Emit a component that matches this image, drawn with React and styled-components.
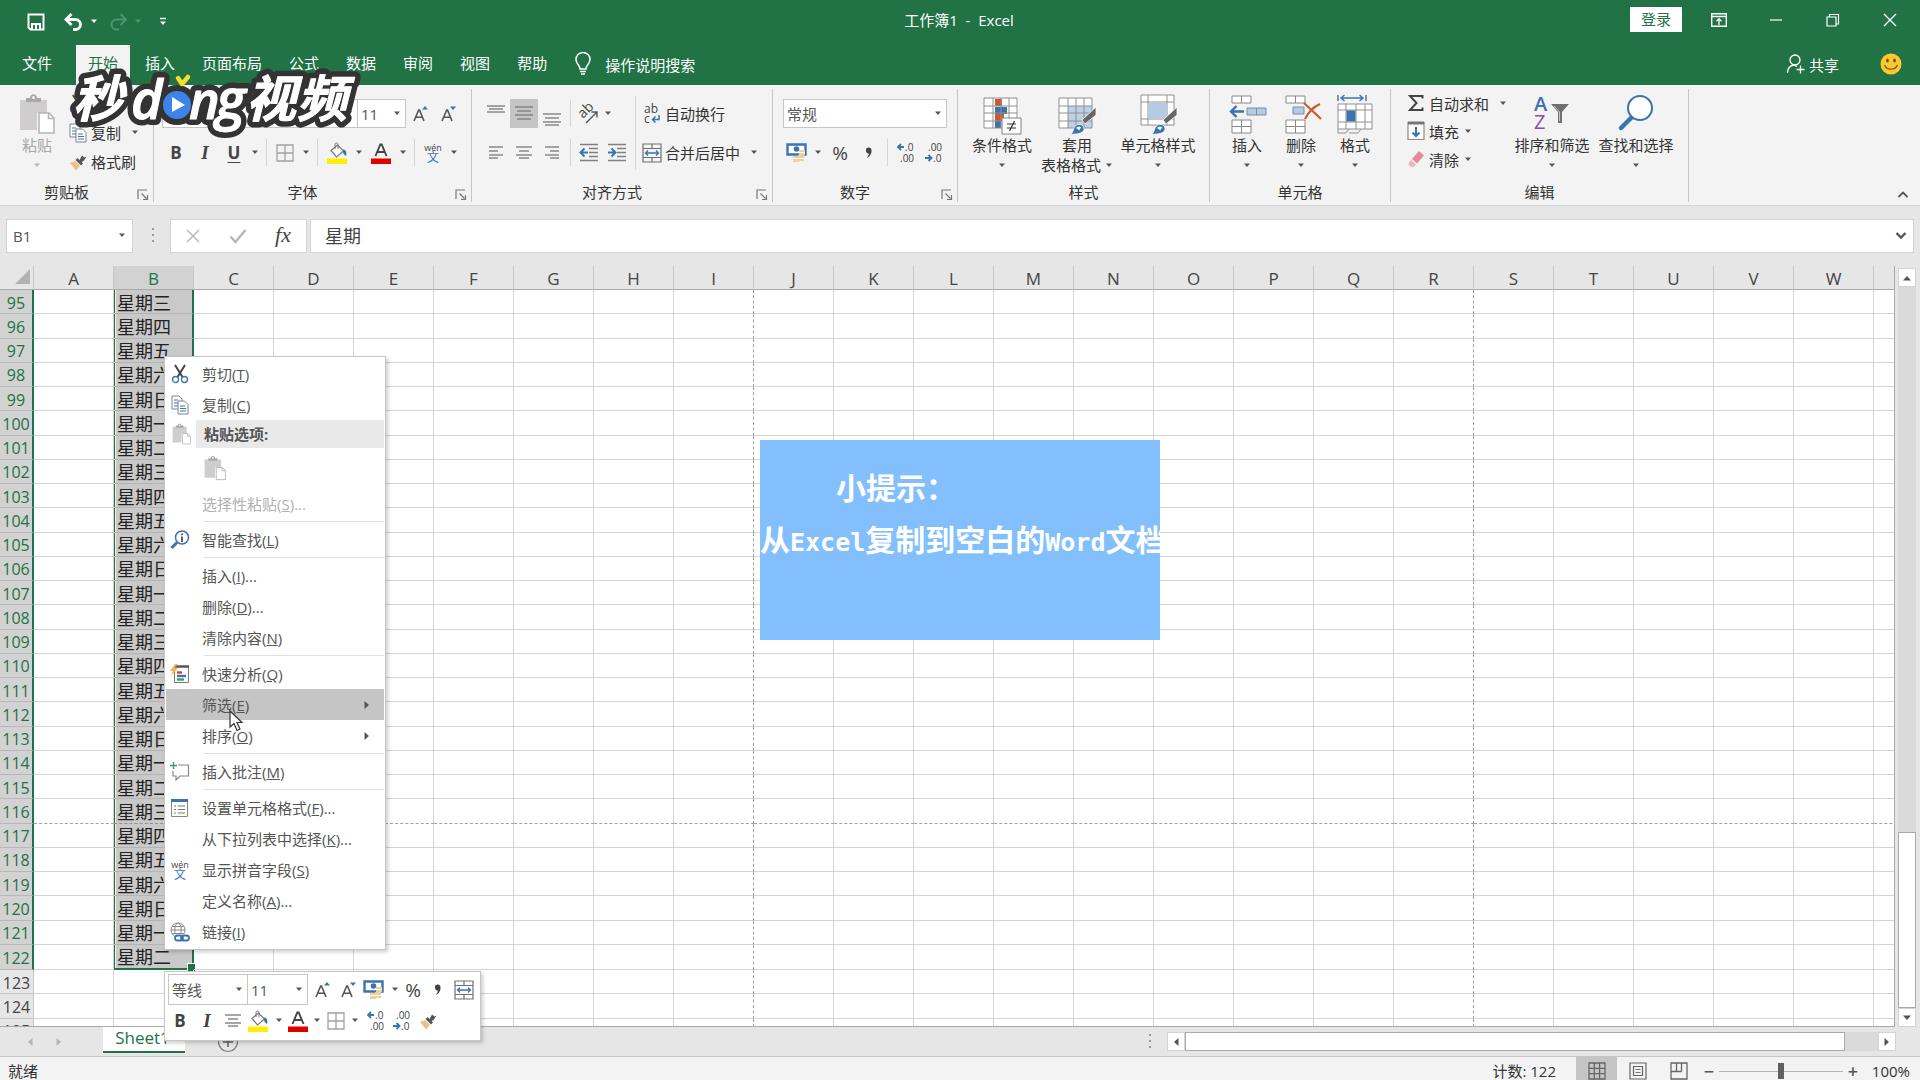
import React from "react";
import styled, { createGlobalStyle, css } from "styled-components";

const palette = {
  green: "#217346",
  ribbon: "#f3f3f3",
  chrome: "#e6e6e6",
  line: "#d4d4d4",
  border: "#c6c6c6",
  text: "#333333",
  muted: "#666666",
  blue: "#3b73af",
  selected: "#c9c9c9",
};

const GlobalStyle = createGlobalStyle`
  * {
    box-sizing: border-box;
  }
  body {
    margin: 0;
    overflow: hidden;
    font-family: "Open Sans", "Noto Sans CJK SC", sans-serif;
    font-size: 15px;
    color: ${palette.text};
  }
  button, input, select {
    font: inherit;
    color: inherit;
    border: 0;
    border-radius: 0;
    background: none;
    padding: 0;
    margin: 0;
  }
  svg {
    display: block;
    flex: none;
    overflow: visible;
  }
`;

/* ---------- icons ---------- */

const Svg = ({ w = 20, h = w, children, ...rest }) => (
  <svg width={w} height={h} viewBox={`0 0 ${w} ${h}`} fill="none" aria-hidden="true" {...rest}>
    {children}
  </svg>
);

const Caret = ({ color = "#555" }) => (
  <Svg w={8} h={5}><path d="M1 0.5h6L4 4z" fill={color} /></Svg>
);

const SaveIcon = () => (
  <Svg w={18}>
    <path d="M1.5 1.5h15v15h-13l-2-2z" stroke="#fff" strokeWidth="2" />
    <path d="M4 10h10v6H4z" fill="#fff" />
    <path d="M6 12h2v4H6zM10 12h2v4h-2z" fill={palette.green} />
  </Svg>
);

const UndoIcon = ({ flip, color = "#fff" }) => (
  <Svg w={20} h={18}>
    <g transform={flip ? "translate(20 0) scale(-1 1)" : undefined} stroke={color}>
      <path d="M2 6.500h9.500a5 5 0 0 1 0 10H9" strokeWidth={flip ? 2 : 2.8} />
      <path d="M7.500 1L2 6.500L7.500 12" strokeWidth={flip ? 2 : 2.8} />
    </g>
  </Svg>
);

const CustomizeIcon = () => (
  <Svg w={8} h={10}>
    <path d="M1 1.500h6" stroke="#fff" strokeWidth="1.500" />
    <path d="M1 4.500h6L4 8z" fill="#fff" />
  </Svg>
);

const BulbIcon = () => (
  <Svg w={18} h={24}>
    <path d="M6 17c0-4-4-5-4-9.500a7 7 0 0 1 14 0C16 12 12 13 12 17z" stroke="#fff" strokeWidth="1.500" />
    <path d="M6 19.500h6M7 22h4" stroke="#fff" strokeWidth="1.500" />
  </Svg>
);

const RibbonDisplayIcon = () => (
  <Svg w={16} h={14}>
    <path d="M0.700 0.700h14.600v12.600H0.700zM0.700 3.500h14.600" stroke="#fff" strokeWidth="1.400" />
    <path d="M8 12V6M5.500 8.200L8 5.700l2.500 2.500" stroke="#fff" strokeWidth="1.300" />
  </Svg>
);

const MinimizeIcon = () => (
  <Svg w={14}><path d="M1 7h12" stroke="#fff" strokeWidth="1.200" /></Svg>
);

const RestoreIcon = () => (
  <Svg w={14}><path d="M1 4h9v9H1zM3.500 4V1.500h9V11H10" stroke="#fff" strokeWidth="1.200" /></Svg>
);

const CloseIcon = ({ color = "#fff" }) => (
  <Svg w={14}><path d="M1 1l12 12M13 1L1 13" stroke={color} strokeWidth="1.400" /></Svg>
);

const ShareIcon = () => (
  <Svg w={20}>
    <circle cx="9" cy="6" r="5" stroke="#fff" strokeWidth="1.300" />
    <path d="M1.500 19c0-5 3-7.500 6.500-8l3 1.500M14.500 11.500v8M10.500 15.500h8" stroke="#fff" strokeWidth="1.300" />
  </Svg>
);

const SmileyIcon = () => (
  <Svg w={22}>
    <circle cx="11" cy="11" r="10.500" fill="#fdc92d" />
    <ellipse cx="7.500" cy="7.500" rx="1.300" ry="2" fill="#6b4a10" />
    <ellipse cx="14.500" cy="7.500" rx="1.300" ry="2" fill="#6b4a10" />
    <path d="M4.500 12c2 5.500 11 5.500 13 0" stroke="#8a5a10" strokeWidth="1.400" />
  </Svg>
);

const PasteIcon = ({ w = 36, h = 42 }) => (
  <svg width={w} height={h} viewBox="0 0 36 42" fill="none" aria-hidden="true">
    <path d="M1 7h27v13H18v17H1z" fill="#cfcdce" />
    <path d="M7 5h4c0-5 7-5 7 0h4v4H7z" fill="#a9a9a9" />
    <circle cx="14.500" cy="4.500" r="1.500" fill="#f3f3f3" />
    <path d="M20 20h10l5 5v15H20z" fill="#fff" stroke="#b5b5b5" strokeWidth="1.500" />
    <path d="M29.500 20v5.500H35" stroke="#b5b5b5" strokeWidth="1.500" />
  </svg>
);

const CutIcon = () => (
  <Svg w={18} h={20}>
    <path d="M4 1l7.500 12M14 1L6.500 13" stroke="#444" strokeWidth="2" />
    <circle cx="4.500" cy="15.500" r="3" stroke={palette.blue} strokeWidth="1.300" />
    <circle cx="13.500" cy="15.500" r="3" stroke={palette.blue} strokeWidth="1.300" />
  </Svg>
);

const CopyIcon = () => (
  <Svg w={18} h={20}>
    <path d="M1 1h7l3 3v10H1z" fill="#fff" stroke="#7a8491" />
    <path d="M3 5h4M3 8h4M3 11h4" stroke={palette.blue} />
    <path d="M7 6h6.500l3.500 3.500V19H7z" fill="#fff" stroke="#7a8491" />
    <path d="M9 11h5M9 13.500h6M9 16h6" stroke={palette.blue} />
  </Svg>
);

const BrushIcon = () => (
  <Svg w={18} h={18}>
    <path d="M1 10l5-2 5 5-4 4.500z" fill="#eac282" />
    <path d="M6.500 7l2-2 5.500 5.500-2 2z" fill="#555" />
    <path d="M10.500 7L13 2.500l2.500 2 2-1-2.500 4-3 2z" fill="#555" />
  </Svg>
);

const Letter = styled.span`
  font-family: ${(p) => (p.$serif ? '"Liberation Serif", serif' : '"Open Sans", sans-serif')};
  font-size: ${(p) => p.$size || 17}px;
  line-height: 20px;
  font-weight: ${(p) => (p.$thin ? 400 : 700)};
  font-style: ${(p) => (p.$italic ? "italic" : "normal")};
  text-decoration: ${(p) => (p.$underline ? "underline" : "none")};
  text-underline-offset: 3px;
  color: #444;
`;

const CommaIcon = () => (
  <Svg w={10} h={12}>
    <path d="M2 3.500a2.700 2.700 0 0 1 5.500-0.300C7.800 7 5.500 10 2.500 11c1.500-1.500 2.300-3 2.300-4.500C3.200 6.800 2 5.500 2 3.500z" fill="#444" />
  </Svg>
);

const FontSizeIcon = ({ down }) => (
  <Svg w={18} h={20}>
    <path d="M2 17L6.700 6h0.800L12 17M3.800 13.300h6.600" stroke="#555" strokeWidth="1.600" />
    <path d={down ? "M10 2.500h6L13 6z" : "M10 5.500h6L13 2z"} fill={palette.blue} />
  </Svg>
);

const BordersIcon = () => (
  <Svg w={18}>
    <path d="M1 1h16v16H1zM9 1v16M1 9h16" stroke="#a2a2a2" strokeWidth="1.300" />
  </Svg>
);

const BucketIcon = () => (
  <Svg w={22} h={22}>
    <path d="M5 8.500L11.500 3l6 6-7 6z" fill="#fff" stroke="#777" strokeWidth="1.200" />
    <path d="M9 7V2.500a1.500 1.500 0 0 1 3 0V7" stroke="#777" />
    <path d="M17 7.500c3 0 4 3 3 6.500-2-1-3.500-3-3-6.500z" fill={palette.blue} />
    <path d="M1 16.500h20V22H1z" fill="#ffee00" />
  </Svg>
);

const FontColorIcon = () => (
  <Svg w={22} h={22}>
    <path d="M5.500 14L10.300 2.500h1.400L16.500 14M7.500 10h7" stroke="#444" strokeWidth="1.900" />
    <path d="M1 16.500h20V22H1z" fill="#e00000" />
  </Svg>
);

const PhoneticIcon = () => (
  <Svg w={20} h={20}>
    <text x="10" y="8" fontSize="9" fontFamily="Open Sans, sans-serif" textAnchor="middle" fill="#444">wén</text>
    <text x="10" y="19" fontSize="12" fontFamily="Noto Sans CJK SC, sans-serif" textAnchor="middle" fill={palette.blue}>文</text>
  </Svg>
);

const LINES = {
  top: [[1, 3, 18], [3, 6, 14], [1, 9, 18]],
  middle: [[1, 4, 18], [3, 8, 14], [1, 12, 18], [3, 16, 14]],
  bottom: [[1, 11, 18], [3, 15, 14], [1, 19, 18], [3, 22, 14]],
  left: [[3, 5, 14], [3, 9, 9], [3, 13, 14], [3, 16, 9]],
  center: [[2, 5, 16], [5, 9, 10], [2, 13, 16], [5, 16, 10]],
  right: [[3, 5, 14], [8, 9, 9], [3, 13, 14], [8, 16, 9]],
};

const LinesIcon = ({ kind }) => (
  <Svg w={20} h={22}>
    {LINES[kind].map(([x, y, w]) => (
      <path key={y} d={`M${x} ${y}h${w}`} stroke="#808080" strokeWidth="1.400" />
    ))}
  </Svg>
);

const OrientationIcon = () => (
  <Svg w={20} h={20}>
    <text fontSize="14" fontFamily="Open Sans, sans-serif" fill="#444" transform="translate(5 15) rotate(-45)">ab</text>
    <path d="M8 19L18.500 8.500M13.500 8h5.500v5.500" stroke="#555" strokeWidth="1.400" />
  </Svg>
);

const IndentIcon = ({ out }) => (
  <Svg w={20} h={20}>
    <path d="M1 1.500h18M10 5.500h9M10 9.500h9M10 13.500h9M1 17.500h18" stroke="#808080" strokeWidth="1.300" />
    <path d={out ? "M9 9.500H2M5.500 5.500l-4 4 4 4" : "M1 9.500h7M4.500 5.500l4 4-4 4"} stroke={palette.blue} strokeWidth="2" />
  </Svg>
);

const WrapIcon = () => (
  <Svg w={20} h={22}>
    <text x="2" y="10" fontSize="12" fontFamily="Open Sans, sans-serif" fill="#444">ab</text>
    <text x="2" y="20" fontSize="12" fontFamily="Open Sans, sans-serif" fill="#444">c</text>
    <path d="M17 12v4.500h-6M13.500 13.500l-3 3 3 3" stroke={palette.blue} strokeWidth="1.500" />
  </Svg>
);

const MergeIcon = () => (
  <Svg w={20} h={20}>
    <path d="M1 1h18v18H1zM1 5.500h18M1 14.500h18M10 1v4.500M10 14.500V19" stroke="#707070" strokeWidth="1.200" />
    <path d="M3.500 10h13M6 7.500L3.500 10 6 12.500M14 7.500l2.500 2.500-2.500 2.500" stroke={palette.blue} strokeWidth="1.300" />
  </Svg>
);

const CurrencyIcon = () => (
  <Svg w={22} h={20}>
    <path d="M1.500 1.500h18v10h-18z" fill="#fff" stroke={palette.blue} strokeWidth="2.400" />
    <circle cx="10.500" cy="6" r="2.800" fill={palette.blue} />
    <path d="M13 7h6v5h-6zM7 13h6v6H7zM12 12h6v6h-6z" fill="#f0cf9d" />
    <path d="M13 9.500h6M7 15.500h6M13 15.500h5" stroke="#fff" />
  </Svg>
);

const DecimalIcon = ({ less }) => (
  <Svg w={20} h={22}>
    <text x={less ? 4 : 9} y="9" fontSize="10" fontFamily="Open Sans, sans-serif" fill="#444">{less ? ".00" : ".0"}</text>
    <text x={less ? 9 : 4} y="20" fontSize="10" fontFamily="Open Sans, sans-serif" fill="#444">{less ? ".0" : ".00"}</text>
    <path d={less ? "M1 16h6M4.500 13l3 3-3 3" : "M8 5H2M5 2L2 5l3 3"} stroke={palette.blue} strokeWidth="1.800" />
  </Svg>
);

const StyleGrid = ({ x = 3, y = 5 }) => (
  <path
    d={`M${x} ${y}h33v30h-33zM${x} ${y + 8}h33M${x} ${y + 15}h33M${x} ${y + 23}h33M${x + 9} ${y}v30M${x + 17} ${y}v30M${x + 25} ${y}v30`}
    fill="none"
    stroke="#909090"
  />
);

const StyleBrush = () => (
  <>
    <path d="M39 14L25 27l3 4 11-9z" fill="#666" stroke="#fff" strokeWidth="0.800" />
    <path d="M13 41c3 0 3-5 5-7.500 3-3.500 8-2.500 9 1.500 1 4.500-6 7-14 6z" fill={palette.blue} stroke="#fff" strokeWidth="0.800" />
    <path d="M19 35c2-2 4-2 5.500 0-1.500 0-2 1.500-2 2.500" fill="#fff" />
  </>
);

const ConditionalIcon = () => (
  <Svg w={40} h={42}>
    <path d="M2 6h34v29H2z" fill="#fff" />
    <path d="M13 6h7v7h-7zM13 21h9v7h-9z" fill="#cf5630" />
    <path d="M13 14h12v7H13zM13 28h6v7h-6z" fill={palette.blue} />
    <StyleGrid x={2} y={5} />
    <path d="M20 25h19v16H20z" fill="#fff" stroke="#808080" />
    <path d="M25 31h9M25 35h9M32.500 28l-5 10" stroke="#333" strokeWidth="1.200" />
  </Svg>
);

const FormatTableIcon = () => (
  <Svg w={40} h={42}>
    <path d="M2 5h33v30H2z" fill="#fff" />
    <path d="M11 13h24v22H11z" fill="#bdd0e6" />
    <StyleGrid x={2} y={5} />
    <StyleBrush />
  </Svg>
);

const CellStylesIcon = () => (
  <Svg w={40} h={42}>
    <path d="M3 2h33v30H3zM3 9h33M3 26h33M10 2v30M29 2v30" fill="#fff" stroke="#909090" />
    <path d="M11 10h18v15H11z" fill="#b5cbe4" />
    <StyleBrush />
  </Svg>
);

const CellsIcon = ({ remove }) => (
  <Svg w={38} h={42}>
    <path d="M4 3h19v7H4zM13.500 3v7M4 27h19v13H4zM13.500 27v13M4 33.500h19" fill="#fff" stroke="#888" />
    {remove ? (
      <>
        <path d="M11 14h11v7H11z" fill="#b5cbe4" stroke="#7b8da3" />
        <path d="M22 10l17 16M38 11c-7 3-12 9-15 15" stroke="#cf5630" strokeWidth="2.200" />
      </>
    ) : (
      <>
        <path d="M19 15h19v7H19zM28.500 15v7" fill="#b5cbe4" stroke="#7b8da3" />
        <path d="M16 18.500H3M8.500 13L3 18.500 8.500 24" stroke={palette.blue} strokeWidth="2.400" />
      </>
    )}
  </Svg>
);

const FormatCellsIcon = () => (
  <Svg w={38} h={42}>
    <path d="M2 2v6M30 2v6M5 5h22M8.500 2L5 5l3.500 3M23.500 2L27 5l-3.500 3" stroke={palette.blue} strokeWidth="1.400" />
    <path d="M2 11h34v25H2zM2 17h34M2 29h34M10 11v25M20 11v25M29 11v25" fill="#fff" stroke="#909090" />
    <path d="M10.500 17.500h9v11h-9z" fill={palette.blue} />
    <path d="M2 36v4h8l3-4M13 40h9l3-4" stroke="#909090" />
  </Svg>
);

const FillIcon = () => (
  <Svg w={18} h={20}>
    <path d="M1 1.500h16v17H1z" fill="#fff" stroke="#888" strokeWidth="1.200" />
    <path d="M1 2h16" stroke="#777" strokeWidth="3" />
    <path d="M9 6v9M5.500 11.500L9 15l3.500-3.500" stroke={palette.blue} strokeWidth="2" />
  </Svg>
);

const EraserIcon = () => (
  <Svg w={18} h={18}>
    <path d="M5 9l7-8 5 4.500-7 8z" fill="#e28a9e" />
    <path d="M4 10l5 4.500-2.500 2.500H4L1 14z" fill="#efb3c0" />
  </Svg>
);

const SigmaIcon = () => (
  <Svg w={18} h={18}>
    <path d="M15.500 4.500V2H3l6.500 7L3 16h12.500v-2.500" stroke="#444" strokeWidth="2" />
  </Svg>
);

const SortFilterIcon = () => (
  <Svg w={40} h={42}>
    <text x="2" y="18" fontSize="20" fontWeight="600" fontFamily="Open Sans, sans-serif" fill={palette.blue}>A</text>
    <text x="2" y="36" fontSize="20" fontFamily="Open Sans, sans-serif" fill="#8a4fa8">Z</text>
    <path d="M19 11h18l-7 8v11h-4V19z" fill="#707070" />
    <path d="M22 13l5.500 6v9" stroke="#c8c8c8" />
  </Svg>
);

const FindIcon = () => (
  <Svg w={38} h={42}>
    <path d="M16 23L4 35" stroke={palette.blue} strokeWidth="4.500" strokeLinecap="round" />
    <circle cx="23" cy="15" r="12" fill="#fff" stroke={palette.blue} strokeWidth="2" />
  </Svg>
);

const LauncherIcon = () => (
  <Svg w={12}>
    <path d="M1 10V1h9" stroke="#777" strokeWidth="1.200" />
    <path d="M4.500 4.500l5 5M10.500 6v4.500H6" stroke="#777" strokeWidth="1.200" />
  </Svg>
);

const ChevronIcon = ({ up }) => (
  <Svg w={12} h={9}>
    <path d={up ? "M1.500 7L6 2.500 10.500 7" : "M1.500 2L6 6.500 10.500 2"} stroke="#555" strokeWidth={up ? 1.8 : 2.4} />
  </Svg>
);

const CheckIcon = () => (
  <Svg w={18} h={16}><path d="M1.500 8.500l5 5.500L16.500 2" stroke="#b5b5b5" strokeWidth="2.400" /></Svg>
);

const SmartLookupIcon = () => (
  <Svg w={20} h={20}>
    <path d="M7 12.500L1.500 18" stroke={palette.blue} strokeWidth="3" />
    <circle cx="12" cy="7.500" r="6.500" fill="#fff" stroke={palette.blue} strokeWidth="1.500" />
    <path d="M12 6.500V12M12 3.500v1.700" stroke="#444" strokeWidth="1.700" />
  </Svg>
);

const QuickAnalysisIcon = () => (
  <Svg w={20} h={20}>
    <path d="M4.500 2.500h14v16h-14z" fill="#fff" stroke="#777" />
    <path d="M4 2.500h15" stroke="#555" strokeWidth="2.500" />
    <path d="M7 8.500h5" stroke="#d04a2a" strokeWidth="2.400" />
    <path d="M7 12h9" stroke={palette.blue} strokeWidth="2.400" />
    <path d="M7 15.500h7" stroke="#3a9a7a" strokeWidth="2.400" />
    <path d="M5 0L0 7h3L1 12l7-8H4.500L8 0z" fill="#f0b452" />
  </Svg>
);

const CommentIcon = () => (
  <Svg w={20} h={20}>
    <path d="M8 3h10.500v11H10l-4 4v-4H3V9" stroke="#888" strokeWidth="1.200" />
    <path d="M3.500 0v7M0 3.500h7" stroke="#3a9a6a" strokeWidth="1.400" />
  </Svg>
);

const FormatListIcon = () => (
  <Svg w={20} h={20}>
    <path d="M1.500 1.500h16v17h-16z" fill="#fff" stroke="#888" />
    <path d="M1 2.500h17" stroke={palette.blue} strokeWidth="3" />
    <path d="M4 8h2M4 11.500h2M4 15h2M8 8h7M8 11.500h7M8 15h7" stroke="#777" strokeWidth="1.200" />
  </Svg>
);

const LinkIcon = () => (
  <Svg w={20} h={20}>
    <circle cx="8" cy="8" r="7" stroke="#888" />
    <ellipse cx="8" cy="8" rx="3.200" ry="7" stroke="#888" />
    <path d="M1 8h14M2 4.500h12M2 11.500h12" stroke="#888" />
    <path d="M4 12h16v8H4z" fill="#fff" />
    <rect x="5" y="13.500" width="8" height="5" rx="2.500" stroke={palette.blue} strokeWidth="1.800" />
    <rect x="11" y="13.500" width="8" height="5" rx="2.500" stroke={palette.blue} strokeWidth="1.800" />
  </Svg>
);

const Arrow = ({ dir, color = "#555" }) => {
  const paths = {
    left: "M7.500 1v8L3 5z",
    right: "M2.500 1v8L7 5z",
    up: "M1 7.500h8L5 3z",
    down: "M1 2.500h8L5 7z",
  };
  return <Svg w={10}><path d={paths[dir]} fill={color} /></Svg>;
};

const ViewIcon = ({ kind }) => (
  <Svg w={18} h={18}>
    {kind === "normal" && <path d="M1 1h16v16H1zM1 6.300h16M1 11.600h16M6.300 1v16M11.600 1v16" stroke="#666" strokeWidth="1.300" />}
    {kind === "layout" && (
      <>
        <path d="M1 1h16v16H1zM4.500 4.500h9v9h-9z" stroke="#666" strokeWidth="1.200" />
        <path d="M6.500 7.500h5M6.500 10.500h5" stroke="#777" />
      </>
    )}
    {kind === "break" && <path d="M1 1h16v16H1zM6.500 1v8.500M11.500 1v8.500M1 9.500h10.500" stroke="#666" strokeWidth="1.300" />}
  </Svg>
);

/* ---------- window frame ---------- */

const Window = styled.div`
  position: relative;
  display: flex;
  flex-direction: column;
  height: 100vh;
  overflow: hidden;
  background: ${palette.chrome};
`;

const TitleBar = styled.header`
  display: grid;
  grid-template-columns: 1fr auto 1fr;
  align-items: center;
  height: 40px;
  padding: 0 2px 1px 0;
  background: ${palette.green};
  color: #fff;
`;

const QuickAccess = styled.div`
  display: flex;
  align-items: center;
  gap: 7px;
  padding: 4px 0 0 27px;
`;

const QuickButton = styled.button`
  display: flex;
  align-items: center;
  gap: 6px;
  margin-right: ${(p) => p.$after || 0}px;
`;

const Title = styled.h1`
  margin: 0;
  font-size: 15px;
  line-height: 24px;
  font-weight: 400;
  white-space: pre;
`;

const WindowControls = styled.div`
  display: flex;
  justify-content: flex-end;
  align-items: center;
`;

const LoginButton = styled.button`
  width: 52px;
  height: 25px;
  line-height: 25px;
  margin-right: 8px;
  background: #fff;
  color: ${palette.green};
`;

const WindowButton = styled.button`
  display: grid;
  place-items: center;
  width: 57px;
  height: 39px;
`;

const TabBar = styled.nav`
  display: flex;
  align-items: flex-end;
  gap: 3px;
  height: 45px;
  padding-left: 10px;
  background: ${palette.green};
  color: #fff;
`;

const Tab = styled.button`
  height: 40px;
  padding: 0 12px 6px;
  margin-right: ${(p) => p.$after || 0}px;
  ${(p) => p.$active && css`
    background: ${palette.ribbon};
    color: ${palette.green};
  `}
`;

const TabAction = styled.button`
  display: flex;
  align-items: center;
  gap: ${(p) => p.$gap}px;
  height: 40px;
  padding-bottom: 2px;
  margin-left: ${(p) => (p.$end ? "auto" : "12px")};
  margin-right: ${(p) => (p.$end ? 38 : 0)}px;
`;

const Feedback = styled.button`
  display: flex;
  align-items: center;
  height: 40px;
  padding-bottom: 2px;
  margin-right: 18px;
`;

/* ---------- ribbon ---------- */

const Ribbon = styled.div`
  display: flex;
  height: 121px;
  padding-top: 4px;
  background: ${palette.ribbon};
  border-bottom: 1px solid ${palette.line};
`;

const Group = styled.section`
  display: flex;
  flex-direction: column;
  flex: 0 0 ${(p) => p.$width}px;
  height: 113px;
  border-right: 1px solid ${palette.border};
`;

const GroupBody = styled.div`
  display: flex;
  flex: 1;
  padding-left: ${(p) => p.$pad || 8}px;
`;

const GroupFooter = styled.div`
  display: flex;
  align-items: flex-end;
  height: 20px;
  line-height: 20px;
  text-align: center;
  span {
    flex: 1;
  }
  button {
    width: 20px;
    padding: 0 4px 1px;
  }
`;

const Rows = styled.div`
  display: flex;
  flex-direction: column;
  gap: 10px;
  padding-top: 10px;
`;

const Stack = styled.div`
  display: flex;
  flex-direction: column;
  width: ${(p) => (p.$width ? `${p.$width}px` : "auto")};
`;

const Row = styled.div`
  display: flex;
  align-items: center;
  height: 29px;
`;

const Tool = styled.button`
  display: grid;
  place-items: center;
  width: ${(p) => p.$width || 28}px;
  height: 29px;
  background: ${(p) => (p.$active ? "#c5c5c5" : "none")};
`;

const Divider = styled.span`
  width: 1px;
  height: 27px;
  margin: 0 4px;
  background: ${palette.line};
`;

const TallDivider = styled.span`
  width: 1px;
  height: 74px;
  margin: 7px 4px 0;
  background: ${palette.line};
`;

const Labelled = styled.button`
  display: flex;
  align-items: center;
  height: ${(p) => p.$height || 29}px;
  white-space: nowrap;
`;

const IconSlot = styled.span`
  display: grid;
  place-items: center;
  width: 24px;
  margin-right: 1px;
`;

const CaretSlot = styled.span`
  margin-left: ${(p) => p.$gap || 5}px;
`;

const Big = styled.button`
  display: flex;
  flex-direction: column;
  align-items: center;
  width: ${(p) => p.$width}px;
  height: 92px;
  padding-top: 4px;
  line-height: 20px;
  white-space: nowrap;
  color: ${(p) => (p.disabled ? "#a8a8a8" : "inherit")};
`;

const BigLine = styled.span`
  display: flex;
  justify-content: center;
  align-items: center;
  gap: 4px;
  height: 20px;
`;

const SelectBox = styled.span`
  display: flex;
  align-items: center;
  width: ${(p) => p.$width}px;
  height: ${(p) => p.$height || 29}px;
  padding-right: 4px;
  background: #fff;
  border: 1px solid ${palette.border};
  & + & {
    border-left: 0;
  }
`;

const Select = styled.select`
  appearance: none;
  flex: 1;
  min-width: 0;
  padding-left: 3px;
  color: #555;
`;

const Collapse = styled.button`
  align-self: flex-end;
  margin: 0 11px 6px auto;
`;

/* ---------- formula bar ---------- */

const FormulaBar = styled.div`
  display: flex;
  align-items: center;
  height: 60px;
  padding: 0 6px 1px;
`;

const WhiteBox = styled.div`
  display: flex;
  align-items: center;
  justify-content: space-between;
  flex: ${(p) => (p.$width ? `0 0 ${p.$width}px` : 1)};
  height: 34px;
  padding: 0 ${(p) => p.$padX || 6}px;
  margin-right: ${(p) => (p.$width ? 3 : 0)}px;
  background: #fff;
  border: 1px solid ${palette.line};
`;

const NameInput = styled.input`
  width: 90px;
  color: #555;
`;

const FormulaInput = styled.input`
  flex: 1;
  padding-left: 8px;
  font-size: 18px;
  line-height: 24px;
  color: #444;
`;

const Dots = styled.span`
  width: 2px;
  height: 15px;
  margin: 0 ${(p) => p.$gap}px;
  background: repeating-linear-gradient(#999 0 2px, transparent 2px 6px);
`;

/* ---------- sheet ---------- */

const SheetArea = styled.main`
  display: flex;
  flex: 1;
  min-height: 0;
`;

const Viewport = styled.div`
  flex: 1;
  min-width: 0;
  overflow: hidden;
  background: #fff;
  border-right: 1px solid #ababab;
  border-bottom: 1px solid #ababab;
`;

const Grid = styled.table`
  table-layout: fixed;
  width: 1954px;
  height: 777px;
  border-collapse: separate;
  border-spacing: 0;
  font-size: 17px;
  line-height: 20px;
`;

const ColumnHead = styled.th`
  height: 24px;
  padding: 2px 0 0;
  font-weight: 400;
  color: ${(p) => (p.$active ? palette.green : "#444")};
  background: ${(p) => (p.$active ? "#d2d2d2" : palette.chrome)};
  border-right: 1px solid ${palette.border};
  border-bottom: 1px solid #ababab;
`;

const Corner = styled.th`
  width: 34px;
  padding: 0 3px 2px 0;
  background: ${palette.chrome};
  border-right: 1px solid ${palette.border};
  border-bottom: 1px solid #ababab;
  svg {
    margin-left: auto;
  }
`;

const RowHead = styled.th`
  padding: 2px 0 0;
  font-size: 16px;
  font-weight: 400;
  text-align: center;
  color: ${(p) => (p.$active ? palette.green : "#444")};
  background: ${(p) => (p.$active ? "#d2d2d2" : palette.chrome)};
  border-right: ${(p) => (p.$active ? `2px solid ${palette.green}` : `1px solid ${palette.border}`)};
  border-bottom: 1px solid ${(p) => (p.$active ? "#b8b8b8" : palette.border)};
`;

const Cell = styled.td`
  position: relative;
  padding: 2px 0 0 3px;
  white-space: nowrap;
  border-right: 1px ${(p) => (p.$breakRight ? "dashed #a0a0a0" : `solid ${palette.line}`)};
  border-bottom: 1px ${(p) => (p.$breakBelow ? "dashed #a0a0a0" : `solid ${palette.line}`)};
  ${(p) => p.$selected && css`
    font-size: 18px;
    color: #222;
    background: ${palette.selected};
    border-right: 2px solid ${palette.green};
    border-bottom-color: ${p.$breakBelow ? "#909090" : "#b4b4b4"};
    box-shadow: inset 1px 0 ${palette.green}, inset 2px 0 #f0f0f0;
  `}
  ${(p) => p.$last && css`
    border-bottom: 2px solid ${palette.green};
    &::after {
      content: "";
      position: absolute;
      right: -4px;
      bottom: -4px;
      width: 7px;
      height: 7px;
      background: ${palette.green};
      border: 1px solid #fff;
    }
  `}
`;

const VerticalScroll = styled.div`
  display: flex;
  flex-direction: column;
  width: 25px;
  padding: 2px 4px 0 3px;
`;

const ScrollButton = styled.button`
  display: grid;
  place-items: center;
  flex: none;
  width: 18px;
  height: 19px;
  background: #fff;
  border: 1px solid ${palette.line};
`;

const Track = styled.div`
  flex: ${(p) => p.$grow};
  background: #dadada;
`;

const Thumb = styled.div`
  flex: ${(p) => p.$grow};
  background: #fff;
  border: 1px solid #ababab;
`;

const Spacer = styled.span`
  flex: 1;
`;

const SheetBar = styled.div`
  display: flex;
  align-items: center;
  height: 30px;
  padding-right: 24px;
  border-bottom: 1px solid ${palette.border};
`;

const NavArrows = styled.div`
  display: flex;
  gap: 19px;
  width: 103px;
  padding-left: 25px;
`;

const SheetTab = styled.button`
  align-self: flex-start;
  width: 82px;
  height: 26px;
  padding: 0 3px 3px 0;
  font-size: 17px;
  line-height: 20px;
  color: ${palette.green};
  background: #fff;
  border-bottom: 2px solid ${palette.green};
`;

const AddSheet = styled.button`
  margin-left: 32px;
`;

const HorizontalScroll = styled.div`
  display: flex;
  width: 729px;
  height: 19px;
`;

const StatusBar = styled.footer`
  display: flex;
  align-items: flex-start;
  justify-content: space-between;
  height: 23px;
  padding: 0 10px 0 8px;
  overflow: hidden;
  line-height: 28px;
  background: ${palette.ribbon};
`;

const StatusTools = styled.div`
  display: flex;
  align-items: center;
  height: 28px;
`;

const Count = styled.span`
  margin-right: 20px;
`;

const ViewButton = styled.button`
  display: grid;
  place-items: center;
  width: 41px;
  height: 28px;
  background: ${(p) => (p.$active ? "#c5c5c5" : "none")};
`;

const ZoomButton = styled.button`
  width: 20px;
  font-size: 18px;
  line-height: 28px;
  font-weight: 600;
  color: #555;
`;

const ZoomSlider = styled.input`
  appearance: none;
  width: 124px;
  height: 16px;
  background: linear-gradient(#b5b5b5, #b5b5b5) center / 100% 1px no-repeat;
  &::-webkit-slider-thumb {
    appearance: none;
    width: 6px;
    height: 16px;
    background: #606060;
  }
`;

const ZoomValue = styled.span`
  width: 47px;
  text-align: right;
`;

/* ---------- overlays ---------- */

const ContextMenu = styled.div`
  position: absolute;
  left: 164px;
  top: 356px;
  width: 222px;
  padding: 1px 1px 2px;
  background: #fff;
  border: 1px solid ${palette.border};
  box-shadow: 2px 2px 4px rgba(0, 0, 0, 0.2);
`;

const MenuItem = styled.button`
  display: grid;
  grid-template-columns: 28px 1fr 22px;
  gap: 8px;
  align-items: center;
  width: 100%;
  height: 31px;
  text-align: left;
  white-space: nowrap;
  color: ${(p) => (p.disabled ? "#b0b0b0" : "#555")};
  background: ${(p) => (p.$hover ? "#c5c5c5" : "none")};
  svg:first-child {
    justify-self: center;
  }
`;

const MenuHeading = styled.div`
  display: grid;
  grid-template-columns: 30px 1fr;
  align-items: center;
  height: 28px;
  line-height: 28px;
  font-weight: 700;
  color: #555;
  svg {
    justify-self: center;
  }
  span {
    padding-left: 8px;
    background: #e9e9e9;
  }
`;

const PasteGallery = styled.div`
  display: flex;
  align-items: center;
  height: 40px;
  padding-left: 38px;
`;

const MenuRule = styled.hr`
  height: 1px;
  margin: 2px 0 2px 38px;
  border: 0;
  background: #e1e1e1;
`;

const MiniToolbar = styled.div`
  position: absolute;
  left: 164px;
  top: 971px;
  width: 317px;
  padding: 2px 3px 4px;
  background: #fff;
  border: 1px solid ${palette.border};
  box-shadow: 2px 2px 4px rgba(0, 0, 0, 0.2);
`;

const MiniRow = styled.div`
  display: flex;
  align-items: center;
  height: 31px;
`;

const Tip = styled.aside`
  position: absolute;
  left: 760px;
  top: 440px;
  width: 400px;
  height: 200px;
  padding-top: 20px;
  overflow: hidden;
  background: #83bffd;
  color: #fff;
`;

const TipLine = styled.p`
  margin: 0;
  padding-left: ${(p) => p.$indent || 0}px;
  font-family: "Noto Sans CJK SC", sans-serif;
  font-size: 30px;
  line-height: 52px;
  font-weight: 700;
  white-space: nowrap;
`;

const TipLatin = styled.span`
  font-family: "DejaVu Sans Mono", monospace;
  font-size: 25px;
  line-height: 30px;
`;

const Watermark = styled.svg`
  position: absolute;
  left: 62px;
  top: 66px;
`;

const Pointer = styled.svg`
  position: absolute;
  left: 229px;
  top: 710px;
`;

/* ---------- data ---------- */

const TABS = ["开始", "插入", "页面布局", "公式", "数据", "审阅", "视图", "帮助"];
const COLUMNS = "ABCDEFGHIJKLMNOPQRSTUVWX".split("");
const ROWS = Array.from({ length: 31 }, (_, i) => 95 + i);
const WEEKDAYS = ["三", "四", "五", "六", "日", "一", "二"];
const LAST_ROW = 122;

const MENU = [
  { label: "剪切", hotkey: "T", icon: <CutIcon /> },
  { label: "复制", hotkey: "C", icon: <CopyIcon /> },
  { type: "paste" },
  { label: "选择性粘贴", hotkey: "S", more: true, disabled: true },
  { type: "rule" },
  { label: "智能查找", hotkey: "L", icon: <SmartLookupIcon /> },
  { type: "rule" },
  { label: "插入", hotkey: "I", more: true },
  { label: "删除", hotkey: "D", more: true },
  { label: "清除内容", hotkey: "N" },
  { type: "rule" },
  { label: "快速分析", hotkey: "Q", icon: <QuickAnalysisIcon /> },
  { label: "筛选", hotkey: "E", submenu: true, hover: true },
  { label: "排序", hotkey: "O", submenu: true },
  { type: "rule" },
  { label: "插入批注", hotkey: "M", icon: <CommentIcon /> },
  { type: "rule" },
  { label: "设置单元格格式", hotkey: "F", more: true, icon: <FormatListIcon /> },
  { label: "从下拉列表中选择", hotkey: "K", more: true },
  { label: "显示拼音字段", hotkey: "S", icon: <PhoneticIcon /> },
  { label: "定义名称", hotkey: "A", more: true },
  { label: "链接", hotkey: "I", icon: <LinkIcon /> },
];

/* ---------- parts ---------- */

const CaretTool = ({ label }) => (
  <Tool $width={14} aria-label={label}><Caret /></Tool>
);

const RibbonGroup = ({ title, width, pad, launcher, children }) => (
  <Group $width={width}>
    <GroupBody $pad={pad}>{children}</GroupBody>
    <GroupFooter>
      <span>{title}</span>
      {launcher && <button aria-label={`${title}设置`}><LauncherIcon /></button>}
    </GroupFooter>
  </Group>
);

const BigButton = ({ icon, label, second, width, disabled }) => (
  <Big $width={width} disabled={disabled}>
    {icon}
    <BigLine>{label}</BigLine>
    <BigLine>{second}<Caret color={disabled ? "#b5b5b5" : "#555"} /></BigLine>
  </Big>
);

const IconLabel = ({ icon, label, caretGap, height }) => (
  <Labelled $height={height}>
    <IconSlot>{icon}</IconSlot>
    {label}
    {caretGap && <CaretSlot $gap={caretGap}><Caret /></CaretSlot>}
  </Labelled>
);

const Dropdown = ({ label, value, width, height }) => (
  <SelectBox $width={width} $height={height}>
    <Select aria-label={label} defaultValue={value}>
      <option>{value}</option>
    </Select>
    <Caret />
  </SelectBox>
);

const HomeRibbon = () => (
  <Ribbon>
    <RibbonGroup title="剪贴板" width={154} launcher>
      <BigButton icon={<PasteIcon />} label="粘贴" width={58} disabled />
      <Stack>
        <Labelled aria-label="剪切"><IconSlot><CutIcon /></IconSlot></Labelled>
        <IconLabel icon={<CopyIcon />} label="复制" caretGap={10} />
        <IconLabel icon={<BrushIcon />} label="格式刷" />
      </Stack>
    </RibbonGroup>
    <RibbonGroup title="字体" width={318} launcher>
      <Rows>
        <Row>
          <Dropdown label="字体" value="" width={196} />
          <Dropdown label="字号" value="11" width={48} />
          <Tool $width={30} aria-label="增大字号"><FontSizeIcon /></Tool>
          <Tool $width={26} aria-label="减小字号"><FontSizeIcon down /></Tool>
        </Row>
        <Row>
          <Tool><Letter>B</Letter></Tool>
          <Tool $width={30}><Letter $italic $serif $size={19}>I</Letter></Tool>
          <Tool><Letter $underline>U</Letter></Tool>
          <CaretTool label="下划线" />
          <Divider />
          <Tool aria-label="边框"><BordersIcon /></Tool>
          <CaretTool label="边框选项" />
          <Divider />
          <Tool $width={30} aria-label="填充颜色"><BucketIcon /></Tool>
          <CaretTool label="填充颜色选项" />
          <Tool $width={30} aria-label="字体颜色"><FontColorIcon /></Tool>
          <CaretTool label="字体颜色选项" />
          <Divider />
          <Tool><PhoneticIcon /></Tool>
          <CaretTool label="拼音选项" />
        </Row>
      </Rows>
    </RibbonGroup>
    <RibbonGroup title="对齐方式" width={301} pad={10} launcher>
      <Rows>
        <Row>
          <Tool aria-label="顶端对齐"><LinesIcon kind="top" /></Tool>
          <Tool $active aria-label="垂直居中"><LinesIcon kind="middle" /></Tool>
          <Tool aria-label="底端对齐"><LinesIcon kind="bottom" /></Tool>
          <Divider />
          <Tool $width={26}><OrientationIcon /></Tool>
          <CaretTool label="方向" />
        </Row>
        <Row>
          <Tool aria-label="左对齐"><LinesIcon kind="left" /></Tool>
          <Tool aria-label="居中"><LinesIcon kind="center" /></Tool>
          <Tool aria-label="右对齐"><LinesIcon kind="right" /></Tool>
          <Divider />
          <Tool aria-label="减少缩进量"><IndentIcon out /></Tool>
          <Tool aria-label="增加缩进量"><IndentIcon /></Tool>
        </Row>
      </Rows>
      <TallDivider />
      <Rows>
        <IconLabel icon={<WrapIcon />} label="自动换行" />
        <IconLabel icon={<MergeIcon />} label="合并后居中" caretGap={10} />
      </Rows>
    </RibbonGroup>
    <RibbonGroup title="数字" width={185} pad={10} launcher>
      <Rows>
        <Dropdown label="数字格式" value="常规" width={164} />
        <Row>
          <Tool aria-label="会计数字格式"><CurrencyIcon /></Tool>
          <CaretTool label="会计数字格式选项" />
          <Tool $width={30}><Letter $thin $size={19}>%</Letter></Tool>
          <Tool aria-label="千位分隔样式"><CommaIcon /></Tool>
          <Divider />
          <Tool><DecimalIcon /></Tool>
          <Tool><DecimalIcon less /></Tool>
        </Row>
      </Rows>
    </RibbonGroup>
    <RibbonGroup title="样式" width={252}>
      <BigButton icon={<ConditionalIcon />} label="条件格式" width={72} />
      <BigButton icon={<FormatTableIcon />} label="套用" second="表格格式" width={78} />
      <BigButton icon={<CellStylesIcon />} label="单元格样式" width={84} />
    </RibbonGroup>
    <RibbonGroup title="单元格" width={181} pad={10}>
      <BigButton icon={<CellsIcon />} label="插入" width={54} />
      <BigButton icon={<CellsIcon remove />} label="删除" width={54} />
      <BigButton icon={<FormatCellsIcon />} label="格式" width={54} />
    </RibbonGroup>
    <RibbonGroup title="编辑" width={298} pad={13}>
      <Stack $width={106}>
        <IconLabel icon={<SigmaIcon />} label="自动求和" caretGap={10} height={28} />
        <IconLabel icon={<FillIcon />} label="填充" caretGap={5} height={28} />
        <IconLabel icon={<EraserIcon />} label="清除" caretGap={5} height={28} />
      </Stack>
      <BigButton icon={<SortFilterIcon />} label="排序和筛选" width={84} />
      <BigButton icon={<FindIcon />} label="查找和选择" width={84} />
    </RibbonGroup>
    <Collapse aria-label="折叠功能区"><ChevronIcon up /></Collapse>
  </Ribbon>
);

const Sheet = () => (
  <SheetArea>
    <Viewport>
      <Grid>
        <thead>
          <tr>
            <Corner aria-label="全选">
              <Svg w={15}><path d="M15 0v15H0z" fill="#b2b2b2" /></Svg>
            </Corner>
            {COLUMNS.map((name) => (
              <ColumnHead key={name} scope="col" $active={name === "B"}>
                {name === "X" ? "" : name}
              </ColumnHead>
            ))}
          </tr>
        </thead>
        <tbody>
          {ROWS.map((row, i) => (
            <tr key={row}>
              <RowHead scope="row" $active={row <= LAST_ROW}>{row}</RowHead>
              {COLUMNS.map((name) => {
                const selected = name === "B" && row <= LAST_ROW;
                return (
                  <Cell
                    key={name}
                    $selected={selected}
                    $last={selected && row === LAST_ROW}
                    $breakRight={name === "I" || name === "R"}
                    $breakBelow={row === 116}
                  >
                    {selected && `星期${WEEKDAYS[i % 7]}`}
                  </Cell>
                );
              })}
            </tr>
          ))}
        </tbody>
      </Grid>
    </Viewport>
    <VerticalScroll>
      <ScrollButton aria-label="向上滚动"><Arrow dir="up" /></ScrollButton>
      <Track $grow={546} />
      <Thumb $grow={174} />
      <ScrollButton aria-label="向下滚动"><Arrow dir="down" /></ScrollButton>
    </VerticalScroll>
  </SheetArea>
);

const CellMenu = () => (
  <ContextMenu role="menu">
    {MENU.map((item, i) => {
      if (item.type === "rule") {
        return <MenuRule key={i} />;
      }
      if (item.type === "paste") {
        return (
          <React.Fragment key={i}>
            <MenuHeading><PasteIcon w={19} h={22} /><span>粘贴选项:</span></MenuHeading>
            <PasteGallery>
              <button aria-label="粘贴"><PasteIcon w={22} h={26} /></button>
            </PasteGallery>
          </React.Fragment>
        );
      }
      return (
        <MenuItem key={i} role="menuitem" disabled={item.disabled} $hover={item.hover}>
          {item.icon || <i />}
          <span>{item.label}(<u>{item.hotkey}</u>){item.more && "..."}</span>
          {item.submenu && <Arrow dir="right" />}
        </MenuItem>
      );
    })}
  </ContextMenu>
);

const FloatingToolbar = () => (
  <MiniToolbar role="toolbar">
    <MiniRow>
      <Dropdown label="字体" value="等线" width={80} height={31} />
      <Dropdown label="字号" value="11" width={60} height={31} />
      <Tool $width={30} aria-label="增大字号"><FontSizeIcon /></Tool>
      <Tool $width={22} aria-label="减小字号"><FontSizeIcon down /></Tool>
      <Tool aria-label="会计数字格式"><CurrencyIcon /></Tool>
      <CaretTool label="会计数字格式选项" />
      <Tool $width={22}><Letter $thin $size={19}>%</Letter></Tool>
      <Tool aria-label="千位分隔样式"><CommaIcon /></Tool>
      <Tool $width={24} aria-label="合并后居中"><MergeIcon /></Tool>
    </MiniRow>
    <MiniRow>
      <Tool $width={24}><Letter>B</Letter></Tool>
      <Tool $width={30}><Letter $italic $serif $size={19}>I</Letter></Tool>
      <Tool $width={22} aria-label="居中"><LinesIcon kind="center" /></Tool>
      <Tool aria-label="填充颜色"><BucketIcon /></Tool>
      <CaretTool label="填充颜色选项" />
      <Tool $width={24} aria-label="字体颜色"><FontColorIcon /></Tool>
      <CaretTool label="字体颜色选项" />
      <Tool $width={24} aria-label="边框"><BordersIcon /></Tool>
      <CaretTool label="边框选项" />
      <Tool><DecimalIcon /></Tool>
      <Tool $width={24}><DecimalIcon less /></Tool>
      <Tool aria-label="格式刷"><BrushIcon /></Tool>
    </MiniRow>
  </MiniToolbar>
);

const LogoText = ({ x, y, size, latin, children }) => (
  <text
    x={x}
    y={y}
    fontSize={size}
    fontWeight={latin ? 600 : 700}
    fontStyle="italic"
    fontFamily={latin ? "Open Sans, sans-serif" : "Noto Sans CJK SC, sans-serif"}
  >
    {children}
  </text>
);

const LogoLetters = () => (
  <>
    <LogoText x={11} y={51} size={50}>秒</LogoText>
    <LogoText x={69} y={53} size={54} latin>d</LogoText>
    <LogoText x={127} y={53} size={52} latin>n</LogoText>
    <LogoText x={154} y={53} size={56} latin>g</LogoText>
    <LogoText x={184} y={51} size={50}>视</LogoText>
    <LogoText x={235} y={51} size={50}>频</LogoText>
  </>
);

const VideoLogo = () => (
  <Watermark width="300" height="76" viewBox="0 0 300 76" aria-hidden="true">
    <g stroke="#333" strokeWidth="12" strokeLinejoin="round" fill="#333">
      <LogoLetters />
      <circle cx="115" cy="39" r="14" />
    </g>
    <g fill="#fff" stroke="#fff" strokeWidth="1" strokeLinejoin="round">
      <LogoLetters />
    </g>
    <circle cx="115" cy="39" r="14" fill="#3c84e8" />
    <path d="M110 31v15l13-7z" fill="#fff" />
    <path d="M116 12l4 6 6-7" fill="none" stroke="#f6dd2b" strokeWidth="4.500" strokeLinecap="round" strokeLinejoin="round" />
  </Watermark>
);

const App = () => (
  <Window>
    <GlobalStyle />
    <TitleBar>
      <QuickAccess>
        <QuickButton aria-label="保存" $after={12}><SaveIcon /></QuickButton>
        <QuickButton aria-label="撤消" $after={3}><UndoIcon /><Caret color="#fff" /></QuickButton>
        <QuickButton aria-label="恢复" $after={10}><UndoIcon flip color="#4f9470" /><Caret color="#4f9470" /></QuickButton>
        <QuickButton aria-label="自定义快速访问工具栏"><CustomizeIcon /></QuickButton>
      </QuickAccess>
      <Title>工作簿1  -  Excel</Title>
      <WindowControls>
        <LoginButton>登录</LoginButton>
        <WindowButton aria-label="功能区显示选项"><RibbonDisplayIcon /></WindowButton>
        <WindowButton aria-label="最小化"><MinimizeIcon /></WindowButton>
        <WindowButton aria-label="还原"><RestoreIcon /></WindowButton>
        <WindowButton aria-label="关闭"><CloseIcon /></WindowButton>
      </WindowControls>
    </TitleBar>
    <TabBar>
      <Tab $after={9}>文件</Tab>
      {TABS.map((tab) => (
        <Tab key={tab} $active={tab === "开始"}>{tab}</Tab>
      ))}
      <TabAction $gap={13}><BulbIcon />操作说明搜索</TabAction>
      <TabAction $gap={3} $end><ShareIcon />共享</TabAction>
      <Feedback aria-label="反馈"><SmileyIcon /></Feedback>
    </TabBar>
    <HomeRibbon />
    <FormulaBar>
      <WhiteBox $width={127}>
        <NameInput aria-label="名称框" defaultValue="B1" />
        <Caret />
      </WhiteBox>
      <Dots $gap={16} />
      <WhiteBox $width={137} $padX={15}>
        <button aria-label="取消"><CloseIcon color="#b5b5b5" /></button>
        <button aria-label="输入"><CheckIcon /></button>
        <button><Letter $serif $italic $thin $size={22}>fx</Letter></button>
      </WhiteBox>
      <WhiteBox>
        <FormulaInput aria-label="编辑栏" defaultValue="星期" />
        <button aria-label="展开编辑栏"><ChevronIcon /></button>
      </WhiteBox>
    </FormulaBar>
    <Sheet />
    <SheetBar>
      <NavArrows>
        <button aria-label="上一个工作表"><Arrow dir="left" color="#b5b5b5" /></button>
        <button aria-label="下一个工作表"><Arrow dir="right" color="#b5b5b5" /></button>
      </NavArrows>
      <SheetTab>Sheet1</SheetTab>
      <AddSheet aria-label="新工作表">
        <Svg w={22}>
          <circle cx="11" cy="11" r="9.500" stroke="#777" strokeWidth="1.200" />
          <path d="M11 6v10M6 11h10" stroke="#666" strokeWidth="1.600" />
        </Svg>
      </AddSheet>
      <Spacer />
      <Dots $gap={16} />
      <HorizontalScroll>
        <ScrollButton aria-label="向左滚动"><Arrow dir="left" /></ScrollButton>
        <Thumb $grow={660} />
        <Track $grow={33} />
        <ScrollButton aria-label="向右滚动"><Arrow dir="right" /></ScrollButton>
      </HorizontalScroll>
    </SheetBar>
    <StatusBar>
      <span>就绪</span>
      <StatusTools>
        <Count>计数: 122</Count>
        <ViewButton $active aria-label="普通"><ViewIcon kind="normal" /></ViewButton>
        <ViewButton aria-label="页面布局"><ViewIcon kind="layout" /></ViewButton>
        <ViewButton aria-label="分页预览"><ViewIcon kind="break" /></ViewButton>
        <ZoomButton>−</ZoomButton>
        <ZoomSlider type="range" min="0" max="200" defaultValue="100" aria-label="缩放" />
        <ZoomButton>+</ZoomButton>
        <ZoomValue>100%</ZoomValue>
      </StatusTools>
    </StatusBar>
    <Tip>
      <TipLine $indent={76}>小提示：</TipLine>
      <TipLine>从<TipLatin>Excel</TipLatin>复制到空白的<TipLatin>Word</TipLatin>文档</TipLine>
    </Tip>
    <CellMenu />
    <FloatingToolbar />
    <VideoLogo />
    <Pointer width="14" height="22" viewBox="0 0 14 22" aria-hidden="true">
      <path d="M1 1v16l4-3.500 3 7 3-1.500-3-6.500h5z" fill="#fff" stroke="#333" strokeWidth="1.200" />
    </Pointer>
  </Window>
);

export default App;
